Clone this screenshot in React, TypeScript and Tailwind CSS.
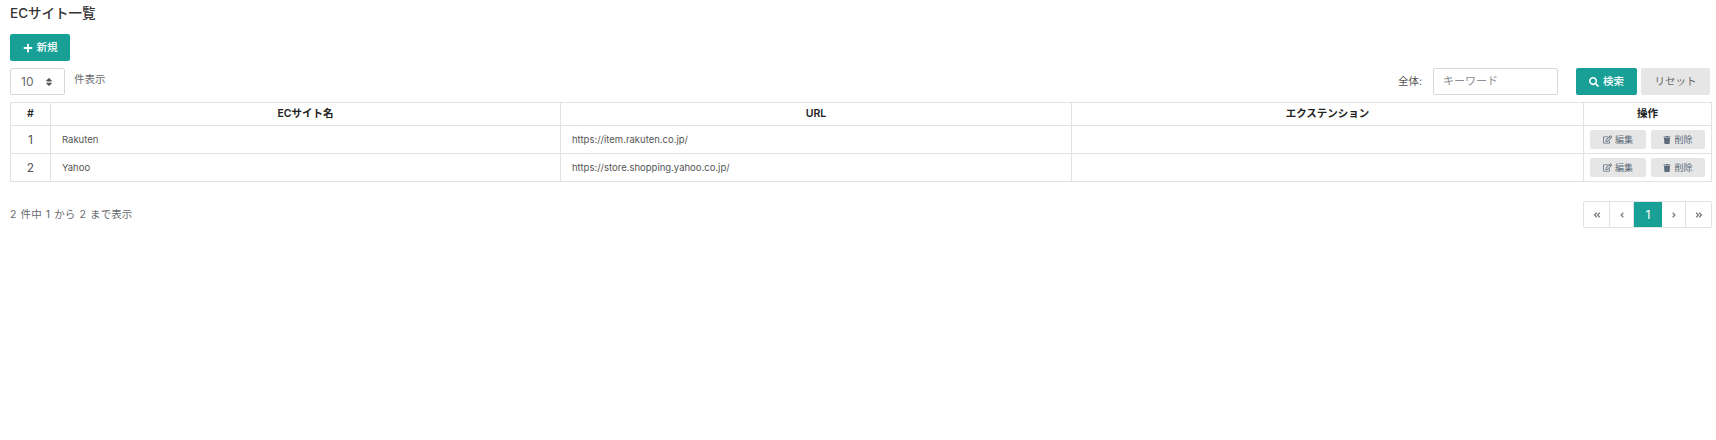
import { FaAngleDoubleLeft, FaAngleDoubleRight, FaAngleLeft, FaAngleRight, FaPlus, FaRegEdit, FaSearch, FaSort, FaTrash } from 'react-icons/fa';

interface Site {
  id: number;
  name: string;
  url: string;
}

const sites: Site[] = [
  { id: 1, name: 'Rakuten', url: 'https://item.rakuten.co.jp/' },
  { id: 2, name: 'Yahoo', url: 'https://store.shopping.yahoo.co.jp/' },
];

const pages = [
  { key: 'first', icon: <FaAngleDoubleLeft />, width: 'w-[26px]' },
  { key: 'prev', icon: <FaAngleLeft />, width: 'w-[24px]' },
  { key: 'current', icon: '1', width: 'w-[28px]' },
  { key: 'next', icon: <FaAngleRight />, width: 'w-[24px]' },
  { key: 'last', icon: <FaAngleDoubleRight />, width: 'w-[25px]' },
];

export default function App() {
  return (
    <div className="h-[440px] bg-white px-[10px] pr-1 font-['Inter','Noto_Sans_CJK_JP',sans-serif] text-[#676a6c]">
      <h1 className="h-[34px] pt-[3px] text-[13.5px] leading-[20px] font-medium text-[#333]">ECサイト一覧</h1>

      <button className="flex h-[27px] w-[60px] items-center justify-center gap-1 rounded-[2px] bg-[#18a096] text-[10.5px] font-medium text-white">
        <FaPlus className="text-[10px]" />
        新規
      </button>

      <div className="mt-[7px] flex h-[27px] items-start">
        <div className="flex h-[27px] w-[55px] items-center justify-between rounded-[2px] border border-[#d5d8de] pr-[10px] pl-[10px] text-[12px]">
          10
          <FaSort className="text-[10px] text-[#555]" />
        </div>
        <span className="ml-[9px] pt-[4px] text-[10.5px] leading-[16px]">件表示</span>

        <span className="mr-[11px] ml-auto pt-[6px] text-[10.5px] leading-[16px] text-[#555]">全体:</span>
        <input
          className="h-[27px] w-[125px] rounded-[2px] border border-[#d5d8de] pb-[2px] pl-[9px] text-[11px] outline-none placeholder:text-[#8b8f94]"
          placeholder="キーワード"
        />
        <button className="ml-[18px] flex h-[27px] w-[61px] items-center justify-center gap-1 rounded-[2px] bg-[#18a096] text-[10.5px] font-medium text-white">
          <FaSearch className="text-[10px]" />
          検索
        </button>
        <button className="mr-[2px] ml-[4px] h-[27px] w-[69px] rounded-[2px] bg-[#e6e6e6] text-[10.5px] text-[#676a6c]">リセット</button>
      </div>

      <table className="mt-[7px] w-[1702px] table-fixed border-collapse text-[9.5px] text-[#555]">
        <thead>
          <tr className="h-[23px] text-[10.5px] font-medium text-[#222]">
            <th className="w-[40px] border border-[#e0e2e8] font-semibold">#</th>
            <th className="w-[510px] border border-[#e0e2e8] font-semibold">ECサイト名</th>
            <th className="w-[511px] border border-[#e0e2e8] font-semibold">URL</th>
            <th className="w-[512px] border border-[#e0e2e8] font-semibold">エクステンション</th>
            <th className="border border-[#e0e2e8] font-semibold">操作</th>
          </tr>
        </thead>
        <tbody>
          {sites.map((site) => (
            <tr key={site.id} className="h-[28px]">
              <td className="border border-[#e0e2e8] text-center text-[12px]">{site.id}</td>
              <td className="border border-[#e0e2e8] pt-[1px] pl-[11px]">{site.name}</td>
              <td className="border border-[#e0e2e8] pt-[1px] pl-[11px]">{site.url}</td>
              <td className="border border-[#e0e2e8]"></td>
              <td className="border border-[#e0e2e8]">
                <div className="flex justify-center gap-[5px]">
                  <button className="flex h-[19px] w-[56px] items-center justify-center gap-[3px] rounded-[2px] bg-[#e6e6e6] text-[9px] text-[#5c6b7a]">
                    <FaRegEdit className="text-[9px]" />
                    編集
                  </button>
                  <button className="flex h-[19px] w-[54px] items-center justify-center gap-[3px] rounded-[2px] bg-[#e6e6e6] text-[9px] text-[#5c6b7a]">
                    <FaTrash className="text-[8px]" />
                    削除
                  </button>
                </div>
              </td>
            </tr>
          ))}
        </tbody>
      </table>

      <div className="mt-[19px] flex items-start justify-between">
        <span className="pt-[6px] text-[10.5px] leading-[16px] tracking-[0.1px] [word-spacing:1px]">2 件中 1 から 2 まで表示</span>
        <div className="flex h-[27px] overflow-hidden rounded-[2px] border border-[#e0e2e8] text-[8px] text-[#777]">
          {pages.map((page) => (
            <div
              key={page.key}
              className={
                page.key === 'current'
                  ? `flex ${page.width} items-center justify-center bg-[#18a096] text-[12px] font-normal text-white`
                  : `flex ${page.width} items-center justify-center border-r border-[#e0e2e8] last:border-r-0`
              }
            >
              {page.icon}
            </div>
          ))}
        </div>
      </div>
    </div>
  );
}
